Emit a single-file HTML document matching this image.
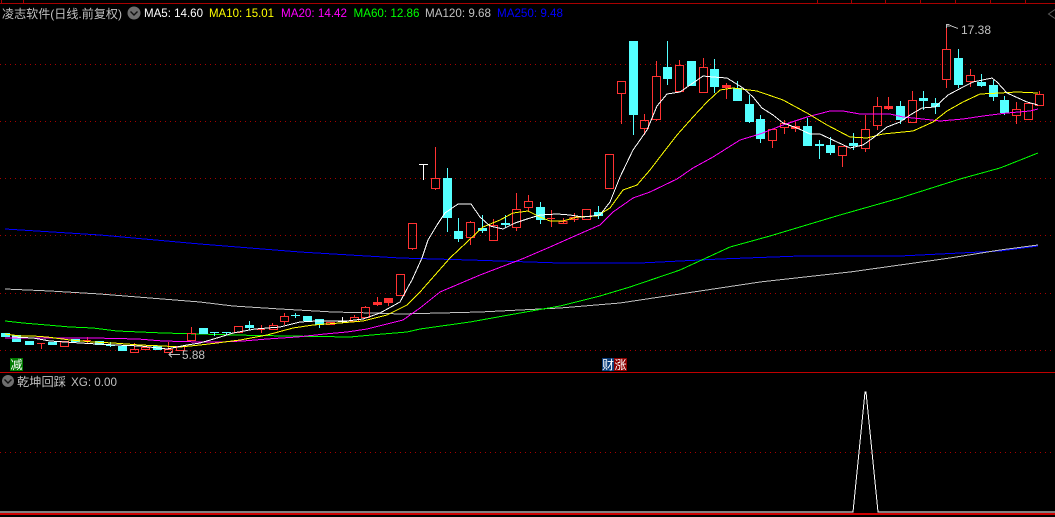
<!DOCTYPE html>
<html><head><meta charset="utf-8"><style>
html,body{margin:0;padding:0;background:#000;width:1055px;height:517px;overflow:hidden}
svg{display:block}
text{font-family:"Liberation Sans","Noto Sans CJK SC","WenQuanYi Zen Hei",sans-serif;font-size:12px}
.l{fill:none;stroke-width:1;shape-rendering:crispEdges}
</style></head><body>
<svg width="1055" height="517" viewBox="0 0 1055 517" xmlns="http://www.w3.org/2000/svg">
<rect width="1055" height="517" fill="#000"/>
<g fill="none" stroke="#a80000" shape-rendering="crispEdges">
<path d="M0 3.5H1055M1.5 0V3M23.5 0V3M817.5 0V3M851.5 0V3M885.5 0V3M920.5 0V3M955.5 0V3M990.5 0V3M1025.5 0V3"/>
<path stroke-dasharray="1 4" d="M0 64.5H1055M0 121.5H1055M0 178.5H1055M0 235.5H1055M0 293.5H1055M0 350.5H1055M0 452.5H1055"/>
<path stroke="#c00000" d="M0 372.5H1055"/>
</g>

<!-- MA250 -->
<polyline class="l" stroke="#0000ff" points="5,229 100,235 200,244 300,252 400,258 470,260 560,263 640,263 720,259 800,256 900,256 1000,251 1038,246"/>
<!-- MA120 -->
<polyline class="l" stroke="#c0c0c0" points="5,289 50,291 100,294 150,298 200,302 233,306 280,309 333,312 373,313 400,314 480,312 560,308 620,303 680,294 760,282 850,272 950,258 1000,250 1038,245"/>
<!-- MA60 -->
<polyline class="l" stroke="#00ff00" points="5,321 23,323 47,325 70,327 93,328 117,331 140,332 163,333 200,334 233,335 287,336 350,337 383,334 407,332 420,329 470,322 520,313 560,306 600,296 630,287 680,270 730,247 770,236 840,215 900,198 960,179 1000,168 1038,153"/>

<!-- red candles hollow -->
<path fill="none" stroke="#ff3232" shape-rendering="crispEdges" d="
M1035.5 94.5h8v11h-8zM1039.5 91V94
M1024.5 103.5h8v16h-8z
M1012.5 109.5h8v6h-8zM1016.5 102V109M1016.5 116V124
M966.5 75.5h8v6h-8zM970.5 69V75M970.5 82V87
M942.5 49.5h8v30h-8zM946.5 26V49M946.5 80V88
M908.5 100.5h8v22h-8zM912.5 91V100
M873.5 106.5h8v19h-8zM877.5 97V106M877.5 126V130
M861.5 129.5h8v19h-8zM865.5 115V129M865.5 149V152
M838.5 146.5h8v9h-8zM842.5 156V167
M780.5 123.5h8v4h-8zM784.5 120V123M784.5 128V134
M768.5 129.5h8v11h-8zM772.5 141V148
M699.5 67.5h8v25h-8zM703.5 58V67
M675.5 65.5h8v26h-8zM679.5 60V65
M652.5 76.5h8v43h-8zM656.5 61V76M656.5 120V121
M640.5 120.5h8v8h-8zM644.5 114V120M644.5 129V135
M617.5 81.5h8v12h-8zM621.5 94V124
M605.5 154.5h8v34h-8z
M582.5 209.5h8v10h-8z
M524.5 201.5h8v6h-8zM528.5 195V201M528.5 208V212
M512.5 209.5h8v18h-8zM516.5 193V209M516.5 228V231
M489.5 225.5h8v15h-8zM493.5 219V225M493.5 241V241
M466.5 222.5h8v15h-8zM470.5 221V222M470.5 238V245
M431.5 178.5h8v10h-8zM435.5 147V178M435.5 189V190
M408.5 223.5h8v25h-8zM412.5 249V250
M396.5 274.5h8v21h-8z
M361.5 307.5h8v10h-8zM365.5 306V307
M350.5 317.5h8v4h-8zM354.5 315V317
M326.5 322.5h8v2h-8z
M280.5 316.5h8v5h-8zM284.5 313V316M284.5 322V325
M269.5 325.5h8v4h-8zM272.5 323V325
M234.5 326.5h8v6h-8z
M187.5 333.5h8v7h-8zM191.5 327V333
M176.5 346.5h8v4h-8z
M164.5 349.5h8v3h-8zM168.5 342V349
M141.5 347.5h8v2h-8z
M130.5 349.5h8v3h-8zM134.5 343V349
M60.5 341.5h8v5h-8z
M574.5 213V222M570 217.5h8v2h-8z
M563.5 218V224M559 221.5h8v2h-8z
M551.5 210V227M547 218.5h8
M261.5 325V333M257 329.5h8
M41.5 343V349M37 343.5h8
M87.5 337V344M83 340.5h8
"/>
<!-- red flat filled -->
<path fill="#ff3232" stroke="#ff3232" shape-rendering="crispEdges" d="
M884.5 106.5h8v2h-8zM888.5 97V106M888.5 109V110
M791.5 126.5h8v2h-8zM795.5 122V126M795.5 129V132
M722.5 85.5h8v2h-8zM726.5 83V85M726.5 88V99
M384.5 298.5h8v4h-8zM388.5 303V306
M373.5 302.5h8v2h-8zM377.5 297V302M377.5 305V306
"/>
<!-- cyan candles -->
<path fill="#54ffff" stroke="none" shape-rendering="crispEdges" d="
M1000 100h9v13h-9zM989 85h9v12h-9zM977 82h9v4h-9zM954 58h9v27h-9zM931 103h9v4h-9zM919 98h9v3h-9zM896 106h9v14h-9zM849 143h9v3h-9zM826 145h9v8h-9zM815 144h9v2h-9zM803 126h9v20h-9zM756 119h9v20h-9zM745 104h9v18h-9zM733 88h9v13h-9zM710 69h9v18h-9zM687 61h9v25h-9zM663 67h9v12h-9zM629 41h9v74h-9zM594 212h9v4h-9zM536 207h9v13h-9zM501 223h9v2h-9zM478 228h9v3h-9zM454 231h9v8h-9zM443 178h9v40h-9zM315 319h9v6h-9zM303 316h9v5h-9zM245 325h9v3h-9zM199 328h9v6h-9zM153 346h9v4h-9zM118 346h9v5h-9zM95 341h9v4h-9zM71 339h9v3h-9zM48 342h9v3h-9zM25 341h9v4h-9zM12 335h9v7h-9zM1 333h9v4H1z"/>
<path fill="none" stroke="#54ffff" shape-rendering="crispEdges" d="
M1004.5 96V115M993.5 80V101M981.5 74V87M958.5 49V88M935.5 98V114M923.5 91V110M900.5 101V124M853.5 133V150M830.5 137V155M819.5 140V159M807.5 118V146M760.5 115V143M749.5 95V123M737.5 81V101M714.5 59V93M667.5 41V85M633.5 115V135M598.5 206V219M540.5 202V224M505.5 215V228M482.5 215V233M458.5 218V242M447.5 168V232M319.5 325V328M249.5 321V330
M291 315.5h9M295.5 313V318M222 332.5h9M226.5 332V335M210 332.5h9M214.5 332V336M106 345.5h9M110.5 342V347"/>
<!-- white T and cross -->
<path fill="none" stroke="#ffffff" shape-rendering="crispEdges" d="M419 164.5h9M423.5 164V180M338 321.5h9M342.5 317V323"/>

<!-- MA20 -->
<polyline class="l" stroke="#ff00ff" points="5,338 33,338 93,338 138,339 163,341 200,342 220,342 243,341 267,339 297,337 325,334 347,332 367,329 387,324 403,320 420,308 440,292 480,275 522,259 550,247 577,235 600,225 613,212 633,198 650,192 677,179 693,168 713,157 740,140 760,134 783,125 807,117 830,111 843,111 860,114 890,114 903,117 923,119 940,121 963,119 983,116 1007,113 1030,111 1038,109"/>
<!-- MA10 -->
<polyline class="l" stroke="#ffff00" points="5,334 20,336 33,336 47,337 70,340 93,342 113,343 140,345 163,346 180,347 200,345 217,343 240,340 267,335 293,328 313,325 340,323 363,321 387,315 407,305 420,292 450,258 467,242 483,227 500,220 513,213 528,211 540,217 550,221 563,221 577,217 597,216 610,208 623,190 637,185 650,170 663,153 677,135 693,117 707,102 720,90 733,88 757,91 783,100 807,113 827,125 850,137 867,138 883,134 913,131 933,122 947,111 963,102 980,94 1000,93 1017,92 1038,93"/>
<!-- MA5 -->
<polyline class="l" stroke="#ffffff" points="12,337 33,338 50,341 80,343 115,345 140,346 167,349 187,345 200,343 217,338 233,333 255,329 280,327 300,322 317,321 347,321 363,319 380,313 400,302 408,287 412,280 422,258 428,240 437,225 445,213 458,204 471,204 480,217 490,226 503,229 515,223 527,219 540,215 557,214 570,215 583,217 600,215 610,202 620,177 633,150 647,130 657,106 667,94 680,92 693,83 703,76 713,77 727,78 743,88 753,97 762,108 773,115 783,123 797,128 810,134 820,134 837,142 850,148 863,145 873,138 887,127 900,122 910,115 922,108 935,107 948,95 963,87 973,82 992,78 997,82 1007,93 1027,102 1038,105"/>

<!-- header text -->
<text x="2" y="18" fill="#c0c0c0" textLength="120" lengthAdjust="spacingAndGlyphs">凌志软件(日线.前复权)</text>
<circle cx="134" cy="13" r="6.5" fill="#6e6e6e"/>
<path d="M130.5 11.5l3.5 3.5 3.5-3.5" fill="none" stroke="#111" stroke-width="1.4"/>
<text x="144" y="17" fill="#ffffff" textLength="59" lengthAdjust="spacingAndGlyphs">MA5: 14.60</text>
<text x="209" y="17" fill="#ffff00" textLength="65" lengthAdjust="spacingAndGlyphs">MA10: 15.01</text>
<text x="281" y="17" fill="#ff00ff" textLength="66" lengthAdjust="spacingAndGlyphs">MA20: 14.42</text>
<text x="353.5" y="17" fill="#00ff00" textLength="66" lengthAdjust="spacingAndGlyphs">MA60: 12.86</text>
<text x="425" y="17" fill="#c0c0c0" textLength="66" lengthAdjust="spacingAndGlyphs">MA120: 9.68</text>
<text x="497" y="17" fill="#0000ff" textLength="66" lengthAdjust="spacingAndGlyphs">MA250: 9.48</text>
<path d="M1055 9.5l-6.5 4.5 6.5 4.5" fill="none" stroke="#5a5a5a"/>

<!-- price labels -->
<path d="M946.5 24.5h3M946.5 24V28M947 26h3M950 25.5l8 3" fill="none" stroke="#c0c0c0" shape-rendering="crispEdges"/>
<text x="961" y="34" fill="#c0c0c0" textLength="30" lengthAdjust="spacingAndGlyphs">17.38</text>
<path d="M169 354.5h11M172 351.5l-3 3 3 3" fill="none" stroke="#c0c0c0" shape-rendering="crispEdges"/>
<text x="182" y="359" fill="#c0c0c0" textLength="23" lengthAdjust="spacingAndGlyphs">5.88</text>

<!-- badges -->
<rect x="10" y="358" width="13" height="13" fill="#007a00"/>
<text x="10.5" y="369" fill="#fff">减</text>
<rect x="602" y="358" width="12" height="13" fill="#0a3c78"/>
<rect x="614" y="358" width="13" height="13" fill="#8b0000"/>
<text x="602" y="369" fill="#fff">财</text>
<text x="614.5" y="369" fill="#fff">涨</text>

<!-- lower panel -->
<circle cx="8" cy="381" r="6" fill="#6e6e6e"/>
<path d="M4.5 379.5l3.5 3.5 3.5-3.5" fill="none" stroke="#111" stroke-width="1.4"/>
<text x="17" y="386" fill="#c0c0c0" textLength="49" lengthAdjust="spacingAndGlyphs">乾坤回踩</text>
<text x="71" y="386" fill="#c0c0c0" textLength="46" lengthAdjust="spacingAndGlyphs">XG: 0.00</text>
<polyline class="l" stroke="#ffffff" points="0,512 853,512 865,392 866,392 878,512 1055,512"/>
<path d="M0 514H1055" stroke="#d00000" stroke-width="2" shape-rendering="crispEdges"/>
</svg>
</body></html>
